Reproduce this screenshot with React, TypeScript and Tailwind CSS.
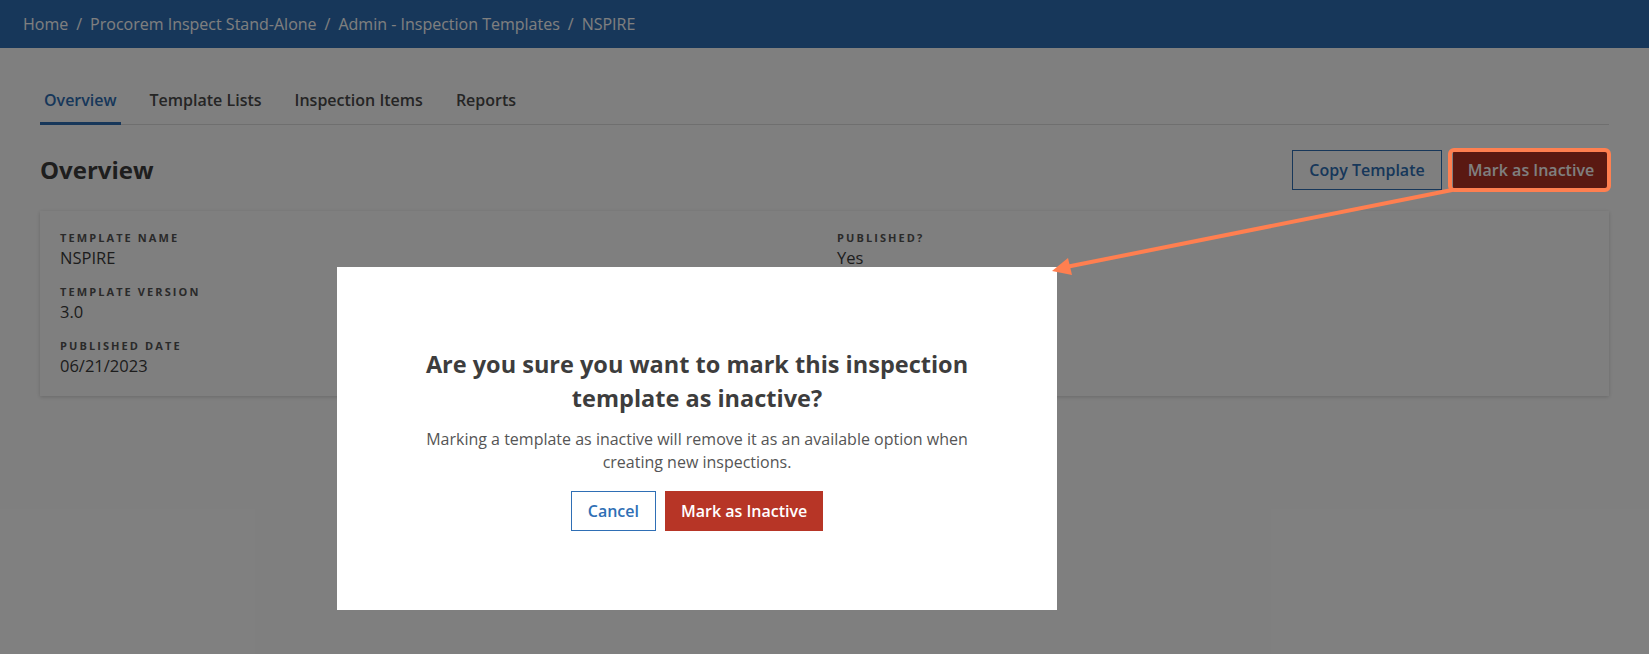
import React from 'react';

const font = { fontFamily: '"Open Sans", "Liberation Sans", sans-serif' };

const crumbs = ['Home', 'Procorem Inspect Stand-Alone', 'Admin - Inspection Templates', 'NSPIRE'];
const tabs = ['Overview', 'Template Lists', 'Inspection Items', 'Reports'];

function Field({ label, value }: { label: string; value: string }) {
  return (
    <div className="mb-[14px] last:mb-0">
      <div className="text-[11px] leading-[16px] font-bold tracking-[0.19em] uppercase text-[#555]">{label}</div>
      <div className="text-[16.5px] leading-[24px] text-[#3a3a3a]">{value}</div>
    </div>
  );
}

function ConfirmDialog() {
  return (
    <div className="absolute left-[337px] top-[267px] w-[720px] h-[343px] bg-white flex flex-col items-center justify-center px-[80px] text-center">
      <h2 className="text-[23.5px] leading-[34px] font-bold text-[#3d3d3d]">
        Are you sure you want to mark this inspection template as inactive?
      </h2>
      <p className="mt-[13px] text-[16px] leading-[23px] text-[#555]">
        Marking a template as inactive will remove it as an available option when creating new inspections.
      </p>
      <div className="mt-[17px] flex gap-[9px]">
        <button className="h-[40px] px-[16px] border border-[#2f6fb5] text-[#2f6fb5] text-[16px] font-semibold bg-white">
          Cancel
        </button>
        <button className="h-[40px] px-[16px] bg-[#b73526] text-white text-[16px] font-semibold">Mark as Inactive</button>
      </div>
    </div>
  );
}

export default function App() {
  return (
    <div className="relative w-[1649px] h-[654px] overflow-hidden bg-white" style={font}>
      <header className="h-[48px] bg-[#2e6eb4] flex items-center px-[23px] text-[16px] text-white">
        {crumbs.map((c, i) => (
          <span key={c} className="flex items-center">
            {i > 0 && <span className="mx-[8px]">/</span>}
            {c}
          </span>
        ))}
      </header>

      <main className="px-[40px]">
        <nav className="mt-[40px] flex gap-[25px] border-b border-[#dedede]">
          {tabs.map((t, i) => (
            <div
              key={t}
              className={`px-[4px] pb-[10px] text-[16px] leading-[24px] font-semibold border-b-[3px] -mb-px ${
                i === 0 ? 'border-[#2e6eb4] text-[#2e6eb4]' : 'border-transparent text-[#4a4a4a]'
              }`}
            >
              {t}
            </div>
          ))}
        </nav>

        <div className="mt-[25px] flex items-center justify-between">
          <h1 className="text-[24px] leading-[32px] font-bold text-[#3c3c3c]">Overview</h1>
          <div className="flex gap-[11px]">
            <button className="h-[40px] w-[150px] border border-[#2e6eb4] text-[#2e6eb4] text-[16px] font-semibold">
              Copy Template
            </button>
            <button className="h-[40px] w-[156px] bg-[#b43224] text-white text-[16px] font-semibold">
              Mark as Inactive
            </button>
          </div>
        </div>

        <section className="mt-[21px] bg-white shadow-[0_1px_4px_rgba(0,0,0,0.18)] grid grid-cols-[777px_1fr] px-[20px] pt-[19px] pb-[18px]">
          <div>
            <Field label="Template Name" value="NSPIRE" />
            <Field label="Template Version" value="3.0" />
            <Field label="Published Date" value="06/21/2023" />
          </div>
          <div>
            <Field label="Published?" value="Yes" />
          </div>
        </section>
      </main>

      {/* backdrop */}
      <div className="absolute inset-0 bg-black/50" />

      <ConfirmDialog />

      {/* callout from the page button to the dialog */}
      <div className="absolute left-[1448px] top-[148px] w-[163px] h-[44px] border-4 border-[#ff7f50] rounded-[6px]" />
      <svg className="absolute inset-0" width="1649" height="654" viewBox="0 0 1649 654">
        <line x1="1452" y1="190" x2="1066" y2="267" stroke="#ff7f50" strokeWidth="4" strokeLinecap="round" />
        <polygon points="1052,271 1068,258 1072,275" fill="#ff7f50" />
      </svg>
    </div>
  );
}
